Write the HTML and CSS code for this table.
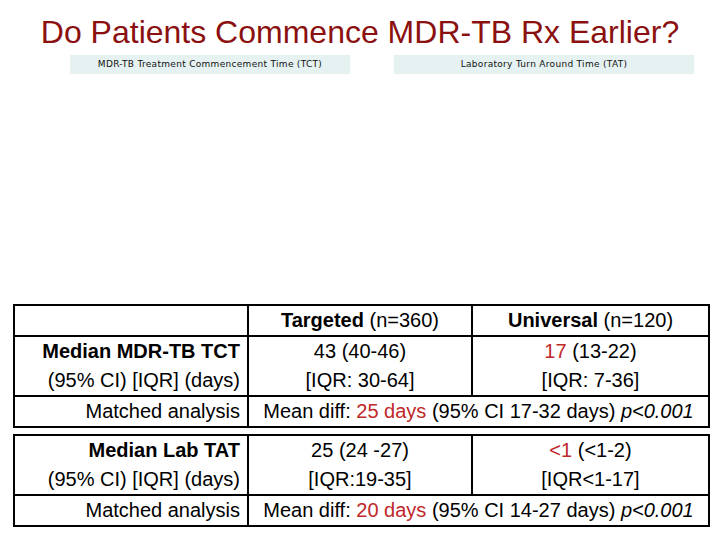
FILE: index.html
```html
<!DOCTYPE html>
<html>
<head>
<meta charset="utf-8">
<link rel="stylesheet" href="styles.css">
</head>
<body>
<div class="slide">
  <h1 class="title">Do Patients Commence MDR-TB Rx Earlier?</h1>
  <div class="tabs">
    <div class="tab tab-tct">MDR-TB Treatment Commencement Time (TCT)</div>
    <div class="tab tab-tat">Laboratory Turn Around Time (TAT)</div>
  </div>
  <div class="chart-area"></div>
  <table class="stats">
    <colgroup><col class="c1"><col class="c2"><col class="c3"></colgroup>
    <tr class="head-row">
      <td></td>
      <td class="mid"><b>Targeted</b> (n=360)</td>
      <td class="mid"><b>Universal</b> (n=120)</td>
    </tr>
    <tr class="data-row">
      <td class="label"><b>Median MDR-TB TCT</b><br>(95% CI) [IQR] (days)</td>
      <td class="mid">43 (40-46)<br>[IQR: 30-64]</td>
      <td class="mid"><span class="red">17</span> (13-22)<br>[IQR: 7-36]</td>
    </tr>
    <tr class="match-row">
      <td class="label">Matched analysis</td>
      <td class="mid" colspan="2">Mean diff: <span class="red">25 days</span> (95% CI 17-32 days) <i>p&lt;0.001</i></td>
    </tr>
  </table>
  <table class="stats second">
    <colgroup><col class="c1"><col class="c2"><col class="c3"></colgroup>
    <tr class="data-row">
      <td class="label"><b>Median Lab TAT</b><br>(95% CI) [IQR] (days)</td>
      <td class="mid">25 (24 -27)<br>[IQR:19-35]</td>
      <td class="mid"><span class="red">&lt;1</span> (&lt;1-2)<br>[IQR&lt;1-17]</td>
    </tr>
    <tr class="match-row">
      <td class="label">Matched analysis</td>
      <td class="mid" colspan="2">Mean diff: <span class="red">20 days</span> (95% CI 14-27 days) <i>p&lt;0.001</i></td>
    </tr>
  </table>
</div>
</body>
</html>
```
FILE: styles.css
```css
html, body {
  margin: 0;
  padding: 0;
  background: #ffffff;
}
.slide {
  width: 720px;
  height: 540px;
  display: flex;
  flex-direction: column;
  font-family: "Liberation Sans", Arial, sans-serif;
  color: #000;
}
.title {
  margin: 14px 0 0 0;
  font-weight: normal;
  font-size: 32px;
  line-height: 36px;
  text-align: center;
  color: #8b1111;
}
.tabs {
  display: flex;
  gap: 44px;
  margin: 5px 0 0 70px;
}
.tab {
  height: 19px;
  background: #e6f2f2;
  font-family: "DejaVu Sans", sans-serif;
  font-size: 9px;
  letter-spacing: 0.3px;
  line-height: 19px;
  text-align: center;
  color: #111;
}
.tab-tct { width: 280px; }
.tab-tat { width: 300px; }
.chart-area {
  height: 230px;
}
.stats {
  margin-left: 13px;
  width: 695px;
  border-collapse: collapse;
  table-layout: fixed;
  font-size: 20px;
}
.stats td {
  border: 2px solid #000;
  padding: 0 7px;
  line-height: 29px;
  white-space: nowrap;
}
.c1 { width: 234px; }
.c2 { width: 224px; }
.c3 { width: 237px; }
.label { text-align: right; }
.mid { text-align: center; }
.head-row td { height: 27px; }
.match-row td { height: 29px; }
.second { margin-top: 6px; }
.red { color: #c0282a; }
```
